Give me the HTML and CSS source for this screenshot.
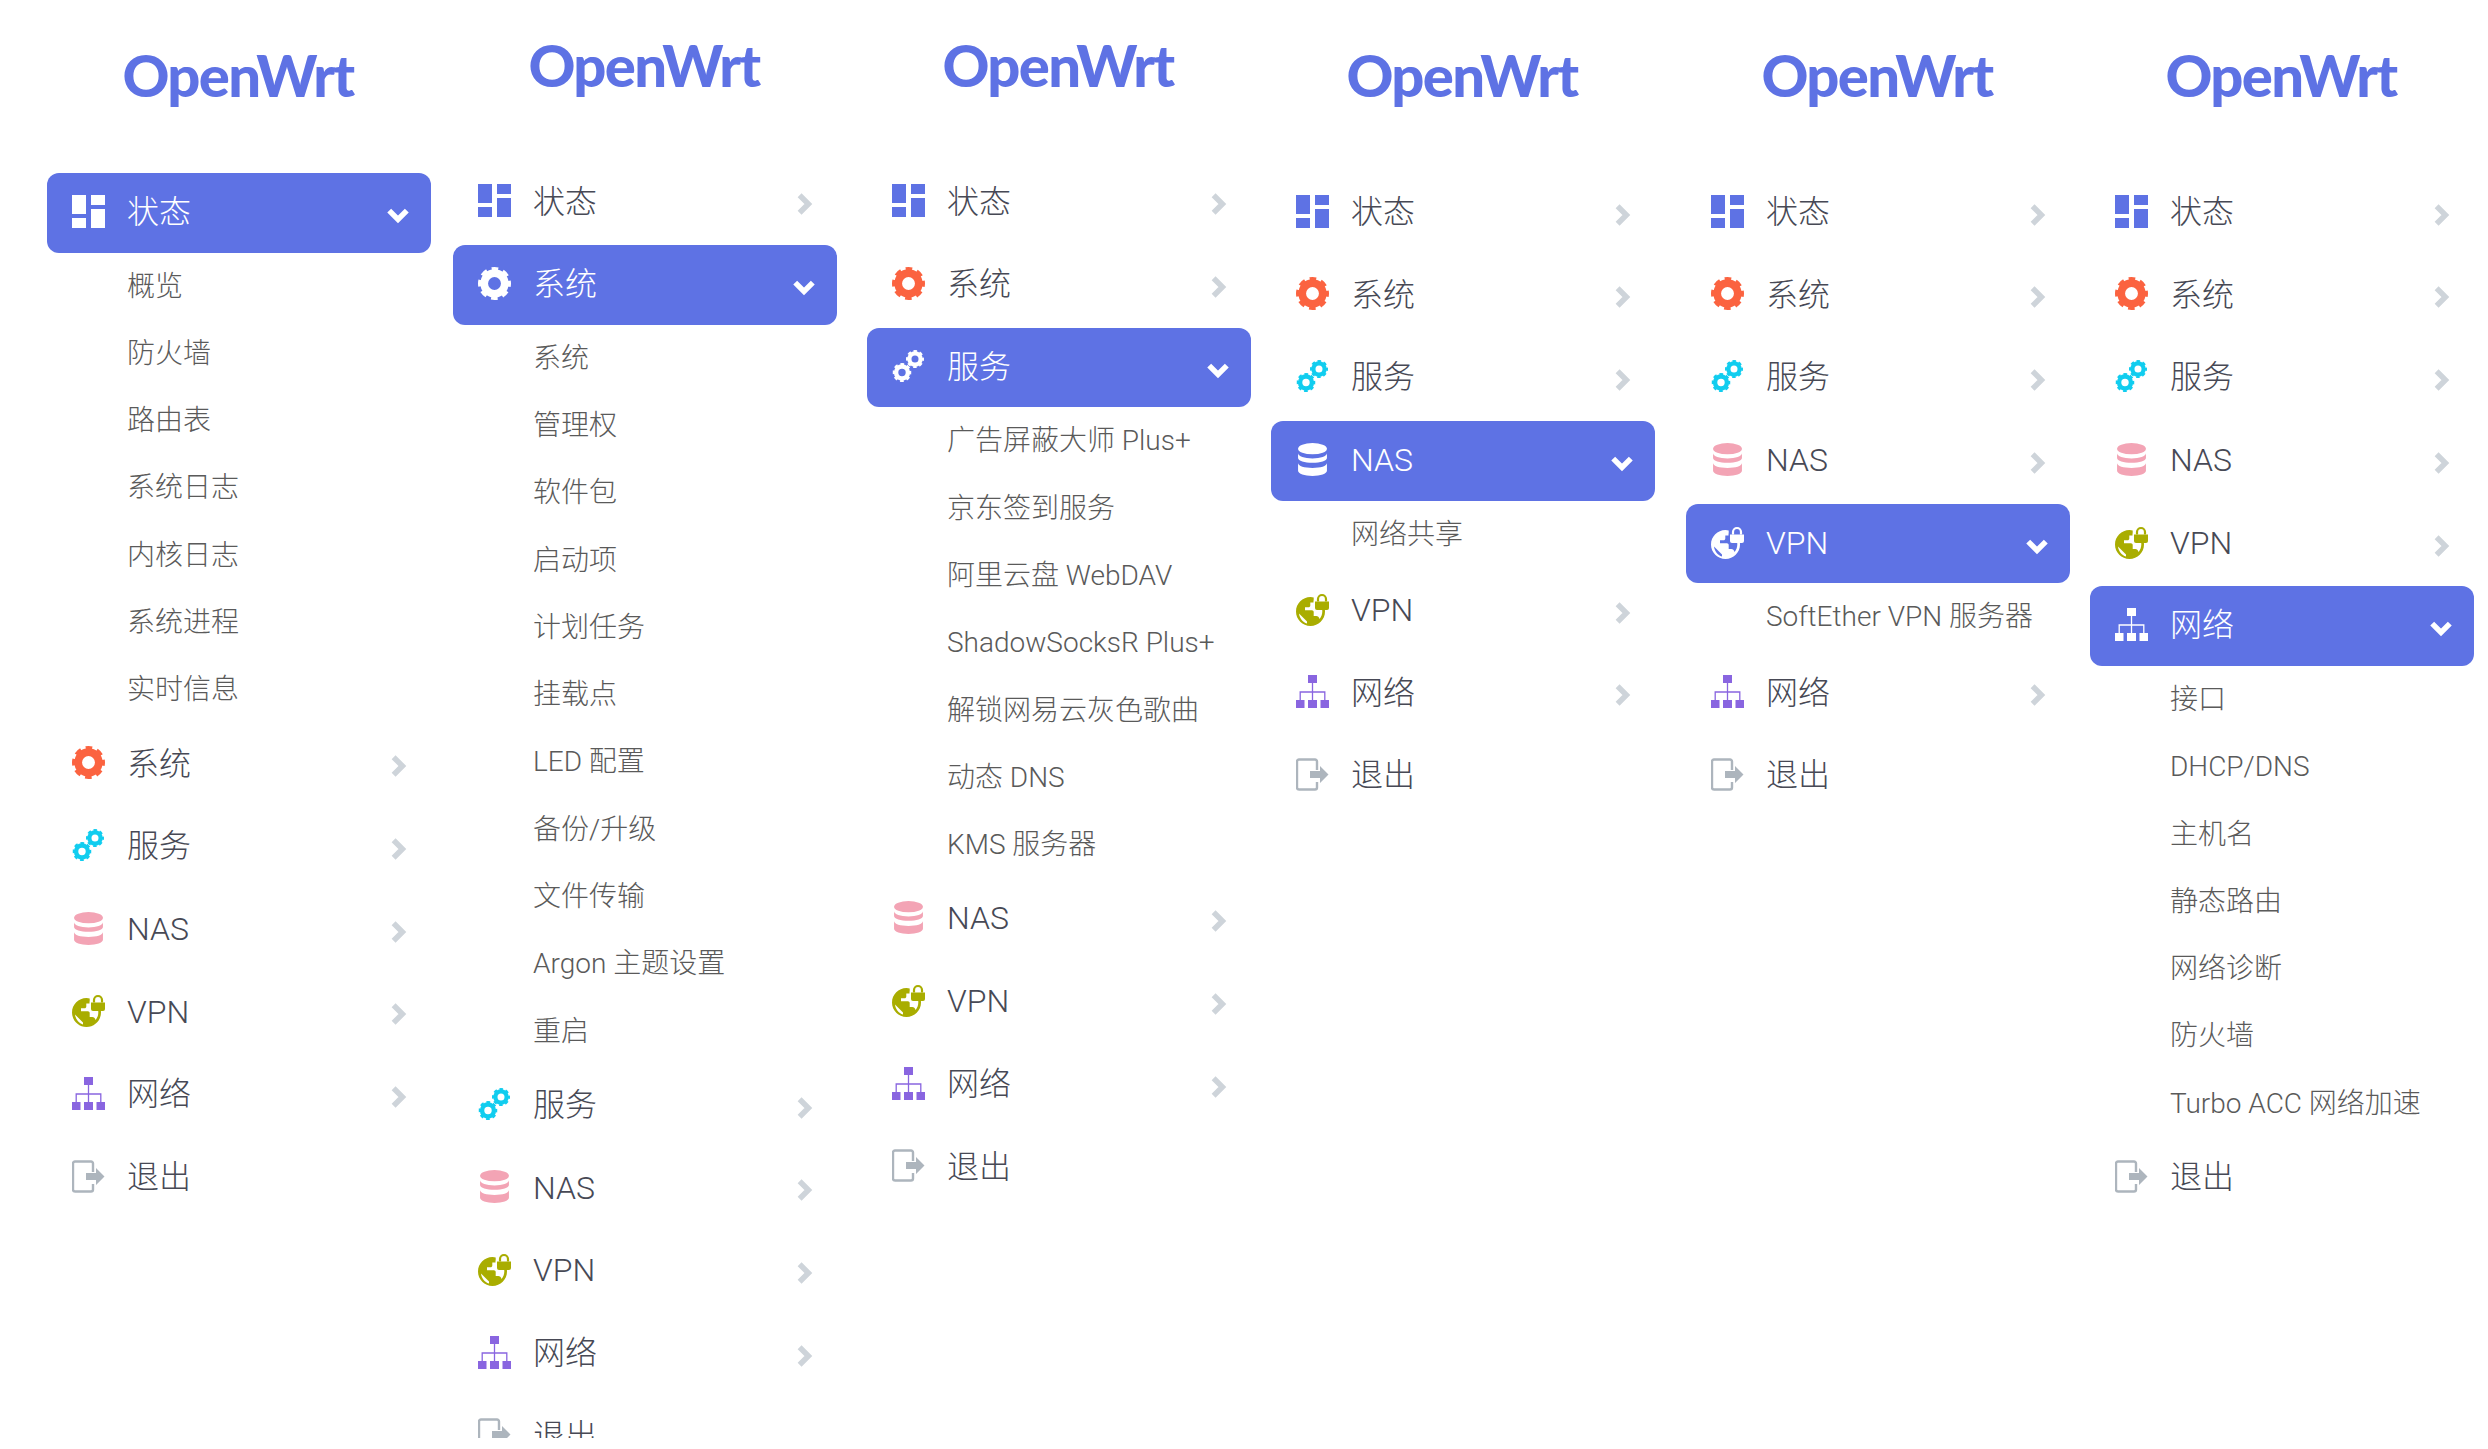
FILE: index.html
```html
<!DOCTYPE html>
<html lang="zh-CN">
<head>
  <meta charset="UTF-8">
  <title>OpenWrt menu</title>
  <link rel="stylesheet" href="styles.css">
</head>
<body>
  <svg class="defs" width="0" height="0">
    <symbol id="i-dash" viewBox="0 0 33 33">
      <path d="M0 0h14v19H0zM19 0h14v10H19zM0 23h14v10H0zM19 14h14v19H19z"/>
    </symbol>
    <symbol id="i-gear" viewBox="0 0 32 32">
      <circle cx="16" cy="16" r="10" fill="none" stroke="currentColor" stroke-width="7.5"/>
      <circle cx="16" cy="16" r="13.500" fill="none" stroke="currentColor" stroke-width="5" stroke-dasharray="6 4.600" stroke-dashoffset="3"/>
    </symbol>
    <symbol id="i-gears" viewBox="0 0 33 33">
      <use href="#i-gear" x="0.500" y="13" width="19" height="19"/>
      <use href="#i-gear" x="14" y="0" width="18" height="18"/>
    </symbol>
    <symbol id="i-db" viewBox="0 0 28 32">
      <ellipse cx="14" cy="5.500" rx="14" ry="5.500"/>
      <path d="M0 10c0 3 6.300 5 14 5s14-2 14-5v4.500c0 2.800-6.300 4.700-14 4.700S0 17.300 0 14.500z"/>
      <path d="M0 19.500c0 3 6.300 4.800 14 4.800s14-1.800 14-4.800V27c0 2.800-6.300 5-14 5S0 29.800 0 27z" />
    </symbol>
    <symbol id="i-vpn" viewBox="0 0 33 33">
      <path fill-rule="evenodd" d="M14.500 4C6.500 4 0 10.500 0 18.500S6.500 33 14.500 33 29 26.500 29 18.500c0-1-.1-2-.3-3H26c.2 1 .3 2 .3 3 0 2.800-1 5.400-2.700 7.400-.6-1.600-1.700-2.900-3.400-2.900h-2.500v-4c0-1-.8-1.800-1.800-1.800H9v-3h3.500c1 0 1.800-.8 1.800-1.800v-3h3.200V7.500h.2V4.500C16.800 4.200 15.700 4 14.500 4zM3 20.500l8 8v2.100C6.600 29.100 3.500 25.200 3 20.500z"/>
      <path d="M19 8.500h14V15a2 2 0 0 1-2 2H21a2 2 0 0 1-2-2z"/>
      <path d="M22 8.500V6a4 4 0 0 1 8 0v2.500" fill="none" stroke="currentColor" stroke-width="2.200"/>
    </symbol>
    <symbol id="i-net" viewBox="0 0 33 33">
      <path d="M12 0h9v8h-9zM0 25h8.500v8H0zM12 25h9v8h-9zM24.500 25H33v8h-8.500z"/>
      <path d="M16.500 8v17M4.200 25v-8h24.600v8" fill="none" stroke="currentColor" stroke-width="1.300"/>
    </symbol>
    <symbol id="i-out" viewBox="0 0 33 33">
      <path d="M21 12V3.500a2 2 0 0 0-2-2H3a2 2 0 0 0-2 2v26a2 2 0 0 0 2 2h16a2 2 0 0 0 2-2V24" fill="none" stroke="currentColor" stroke-width="2.400" transform="translate(0 0)"/>
      <path d="M14 13h10V8l8.500 8.500L24 25v-5H14z"/>
    </symbol>
  </svg>

  <main class="page">

    <section class="col col-1">
      <div class="logo">OpenWrt</div>
      <nav class="menu">
        <a class="row active dash"><svg class="ico"><use href="#i-dash"/></svg><span class="label">状态</span><svg class="arrow" viewBox="0 0 20 20"><path d="M2 6l8 8 8-8"/></svg></a>
        <ul class="sub">
          <li>概览</li><li>防火墙</li><li>路由表</li><li>系统日志</li><li>内核日志</li><li>系统进程</li><li>实时信息</li>
        </ul>
        <a class="row sys"><svg class="ico"><use href="#i-gear"/></svg><span class="label">系统</span><svg class="arrow" viewBox="0 0 20 20"><path d="M6 2l8 8-8 8"/></svg></a>
        <a class="row srv"><svg class="ico"><use href="#i-gears"/></svg><span class="label">服务</span><svg class="arrow" viewBox="0 0 20 20"><path d="M6 2l8 8-8 8"/></svg></a>
        <a class="row nas"><svg class="ico"><use href="#i-db"/></svg><span class="label">NAS</span><svg class="arrow" viewBox="0 0 20 20"><path d="M6 2l8 8-8 8"/></svg></a>
        <a class="row vpn"><svg class="ico"><use href="#i-vpn"/></svg><span class="label">VPN</span><svg class="arrow" viewBox="0 0 20 20"><path d="M6 2l8 8-8 8"/></svg></a>
        <a class="row net"><svg class="ico"><use href="#i-net"/></svg><span class="label">网络</span><svg class="arrow" viewBox="0 0 20 20"><path d="M6 2l8 8-8 8"/></svg></a>
        <a class="row out"><svg class="ico"><use href="#i-out"/></svg><span class="label">退出</span></a>
      </nav>
    </section>

    <section class="col col-2 raised">
      <div class="logo">OpenWrt</div>
      <nav class="menu">
        <a class="row dash"><svg class="ico"><use href="#i-dash"/></svg><span class="label">状态</span><svg class="arrow" viewBox="0 0 20 20"><path d="M6 2l8 8-8 8"/></svg></a>
        <a class="row active sys"><svg class="ico"><use href="#i-gear"/></svg><span class="label">系统</span><svg class="arrow" viewBox="0 0 20 20"><path d="M2 6l8 8 8-8"/></svg></a>
        <ul class="sub">
          <li>系统</li><li>管理权</li><li>软件包</li><li>启动项</li><li>计划任务</li><li>挂载点</li><li>LED 配置</li><li>备份/升级</li><li>文件传输</li><li>Argon 主题设置</li><li>重启</li>
        </ul>
        <a class="row srv"><svg class="ico"><use href="#i-gears"/></svg><span class="label">服务</span><svg class="arrow" viewBox="0 0 20 20"><path d="M6 2l8 8-8 8"/></svg></a>
        <a class="row nas"><svg class="ico"><use href="#i-db"/></svg><span class="label">NAS</span><svg class="arrow" viewBox="0 0 20 20"><path d="M6 2l8 8-8 8"/></svg></a>
        <a class="row vpn"><svg class="ico"><use href="#i-vpn"/></svg><span class="label">VPN</span><svg class="arrow" viewBox="0 0 20 20"><path d="M6 2l8 8-8 8"/></svg></a>
        <a class="row net"><svg class="ico"><use href="#i-net"/></svg><span class="label">网络</span><svg class="arrow" viewBox="0 0 20 20"><path d="M6 2l8 8-8 8"/></svg></a>
        <a class="row out"><svg class="ico"><use href="#i-out"/></svg><span class="label">退出</span></a>
      </nav>
    </section>

    <section class="col col-3 raised">
      <div class="logo">OpenWrt</div>
      <nav class="menu">
        <a class="row dash"><svg class="ico"><use href="#i-dash"/></svg><span class="label">状态</span><svg class="arrow" viewBox="0 0 20 20"><path d="M6 2l8 8-8 8"/></svg></a>
        <a class="row sys"><svg class="ico"><use href="#i-gear"/></svg><span class="label">系统</span><svg class="arrow" viewBox="0 0 20 20"><path d="M6 2l8 8-8 8"/></svg></a>
        <a class="row active srv"><svg class="ico"><use href="#i-gears"/></svg><span class="label">服务</span><svg class="arrow" viewBox="0 0 20 20"><path d="M2 6l8 8 8-8"/></svg></a>
        <ul class="sub">
          <li>广告屏蔽大师 Plus+</li><li>京东签到服务</li><li>阿里云盘 WebDAV</li><li>ShadowSocksR Plus+</li><li>解锁网易云灰色歌曲</li><li>动态 DNS</li><li>KMS 服务器</li>
        </ul>
        <a class="row nas"><svg class="ico"><use href="#i-db"/></svg><span class="label">NAS</span><svg class="arrow" viewBox="0 0 20 20"><path d="M6 2l8 8-8 8"/></svg></a>
        <a class="row vpn"><svg class="ico"><use href="#i-vpn"/></svg><span class="label">VPN</span><svg class="arrow" viewBox="0 0 20 20"><path d="M6 2l8 8-8 8"/></svg></a>
        <a class="row net"><svg class="ico"><use href="#i-net"/></svg><span class="label">网络</span><svg class="arrow" viewBox="0 0 20 20"><path d="M6 2l8 8-8 8"/></svg></a>
        <a class="row out"><svg class="ico"><use href="#i-out"/></svg><span class="label">退出</span></a>
      </nav>
    </section>

    <section class="col col-4">
      <div class="logo">OpenWrt</div>
      <nav class="menu">
        <a class="row dash"><svg class="ico"><use href="#i-dash"/></svg><span class="label">状态</span><svg class="arrow" viewBox="0 0 20 20"><path d="M6 2l8 8-8 8"/></svg></a>
        <a class="row sys"><svg class="ico"><use href="#i-gear"/></svg><span class="label">系统</span><svg class="arrow" viewBox="0 0 20 20"><path d="M6 2l8 8-8 8"/></svg></a>
        <a class="row srv"><svg class="ico"><use href="#i-gears"/></svg><span class="label">服务</span><svg class="arrow" viewBox="0 0 20 20"><path d="M6 2l8 8-8 8"/></svg></a>
        <a class="row active nas"><svg class="ico"><use href="#i-db"/></svg><span class="label">NAS</span><svg class="arrow" viewBox="0 0 20 20"><path d="M2 6l8 8 8-8"/></svg></a>
        <ul class="sub single">
          <li>网络共享</li>
        </ul>
        <a class="row vpn"><svg class="ico"><use href="#i-vpn"/></svg><span class="label">VPN</span><svg class="arrow" viewBox="0 0 20 20"><path d="M6 2l8 8-8 8"/></svg></a>
        <a class="row net"><svg class="ico"><use href="#i-net"/></svg><span class="label">网络</span><svg class="arrow" viewBox="0 0 20 20"><path d="M6 2l8 8-8 8"/></svg></a>
        <a class="row out"><svg class="ico"><use href="#i-out"/></svg><span class="label">退出</span></a>
      </nav>
    </section>

    <section class="col col-5">
      <div class="logo">OpenWrt</div>
      <nav class="menu">
        <a class="row dash"><svg class="ico"><use href="#i-dash"/></svg><span class="label">状态</span><svg class="arrow" viewBox="0 0 20 20"><path d="M6 2l8 8-8 8"/></svg></a>
        <a class="row sys"><svg class="ico"><use href="#i-gear"/></svg><span class="label">系统</span><svg class="arrow" viewBox="0 0 20 20"><path d="M6 2l8 8-8 8"/></svg></a>
        <a class="row srv"><svg class="ico"><use href="#i-gears"/></svg><span class="label">服务</span><svg class="arrow" viewBox="0 0 20 20"><path d="M6 2l8 8-8 8"/></svg></a>
        <a class="row nas"><svg class="ico"><use href="#i-db"/></svg><span class="label">NAS</span><svg class="arrow" viewBox="0 0 20 20"><path d="M6 2l8 8-8 8"/></svg></a>
        <a class="row active vpn"><svg class="ico"><use href="#i-vpn"/></svg><span class="label">VPN</span><svg class="arrow" viewBox="0 0 20 20"><path d="M2 6l8 8 8-8"/></svg></a>
        <ul class="sub single">
          <li>SoftEther VPN 服务器</li>
        </ul>
        <a class="row net"><svg class="ico"><use href="#i-net"/></svg><span class="label">网络</span><svg class="arrow" viewBox="0 0 20 20"><path d="M6 2l8 8-8 8"/></svg></a>
        <a class="row out"><svg class="ico"><use href="#i-out"/></svg><span class="label">退出</span></a>
      </nav>
    </section>

    <section class="col col-6">
      <div class="logo">OpenWrt</div>
      <nav class="menu">
        <a class="row dash"><svg class="ico"><use href="#i-dash"/></svg><span class="label">状态</span><svg class="arrow" viewBox="0 0 20 20"><path d="M6 2l8 8-8 8"/></svg></a>
        <a class="row sys"><svg class="ico"><use href="#i-gear"/></svg><span class="label">系统</span><svg class="arrow" viewBox="0 0 20 20"><path d="M6 2l8 8-8 8"/></svg></a>
        <a class="row srv"><svg class="ico"><use href="#i-gears"/></svg><span class="label">服务</span><svg class="arrow" viewBox="0 0 20 20"><path d="M6 2l8 8-8 8"/></svg></a>
        <a class="row nas"><svg class="ico"><use href="#i-db"/></svg><span class="label">NAS</span><svg class="arrow" viewBox="0 0 20 20"><path d="M6 2l8 8-8 8"/></svg></a>
        <a class="row vpn"><svg class="ico"><use href="#i-vpn"/></svg><span class="label">VPN</span><svg class="arrow" viewBox="0 0 20 20"><path d="M6 2l8 8-8 8"/></svg></a>
        <a class="row active net"><svg class="ico"><use href="#i-net"/></svg><span class="label">网络</span><svg class="arrow" viewBox="0 0 20 20"><path d="M2 6l8 8 8-8"/></svg></a>
        <ul class="sub">
          <li>接口</li><li>DHCP/DNS</li><li>主机名</li><li>静态路由</li><li>网络诊断</li><li>防火墙</li><li>Turbo ACC 网络加速</li>
        </ul>
        <a class="row out"><svg class="ico"><use href="#i-out"/></svg><span class="label">退出</span></a>
      </nav>
    </section>

  </main>
</body>
</html>
```

FILE: styles.css
```css
* {
  box-sizing: border-box;
}
html, body {
  margin: 0;
  padding: 0;
  background: #fff;
}
body {
  font-family: Roboto, "Noto Sans CJK SC", sans-serif;
  font-weight: 300;
  overflow: hidden;
}
.defs {
  position: absolute;
}

.page {
  display: flex;
  height: 1438px;
  overflow: hidden;
}
.col {
  width: 384px;
  flex: none;
  padding-top: 173px;
  position: relative;
}
.col.raised {
  padding-top: 162.5px;
}
.col-1 { margin-left: 47px; }
.col-2 { margin-left: 22px; }
.col-3 { margin-left: 30px; }
.col-4 { margin-left: 20px; }
.col-5 { margin-left: 31px; }
.col-6 { margin-left: 20px; }

.logo {
  position: absolute;
  top: 29px;
  left: -2px;
  right: 0;
  text-align: center;
  font-family: Lato, sans-serif;
  font-weight: 900;
  font-size: 58px;
  letter-spacing: -1.7px;
  line-height: 92px;
  color: #5e72e4;
}
.col.raised .logo {
  top: 19px;
}

.row {
  display: flex;
  align-items: center;
  height: 79.5px;
  margin-bottom: 3.2px;
  padding: 0 22px 0 25px;
  border-radius: 12px;
  font-size: 32px;
  color: #474955;
}
.row.active {
  background: #5e72e4;
  color: #fff;
  margin-bottom: 0;
}
.ico {
  width: 33px;
  height: 33px;
  flex: none;
  margin-right: 22px;
  margin-top: -3px;
  fill: currentColor;
  color: inherit;
}
.dash .ico { color: #5e72e4; }
.sys .ico { color: #fb6340; }
.srv .ico { color: #11cdef; }
.nas .ico { color: #f3a4b5; }
.vpn .ico { color: #a9ad00; }
.net .ico { color: #8965e0; }
.out .ico { color: #adb5bd; }
.row.active .ico { color: #fff; }

.label {
  flex: 1;
  margin-top: -1.5px;
  line-height: 1;
}
.arrow {
  width: 22px;
  height: 22px;
  flex: none;
  fill: none;
  stroke: #ced4da;
  stroke-width: 5;
  margin-top: 4px;
}
.row.active .arrow {
  stroke: #fff;
}

.sub {
  list-style: none;
  margin: 0 0 1px;
  padding: 0 0 0 80px;
}
.sub.single {
  margin-bottom: 3px;
}
.sub li {
  height: 67.3px;
  line-height: 67.3px;
  font-size: 28px;
  color: #5a5a5a;
  white-space: nowrap;
}
```
